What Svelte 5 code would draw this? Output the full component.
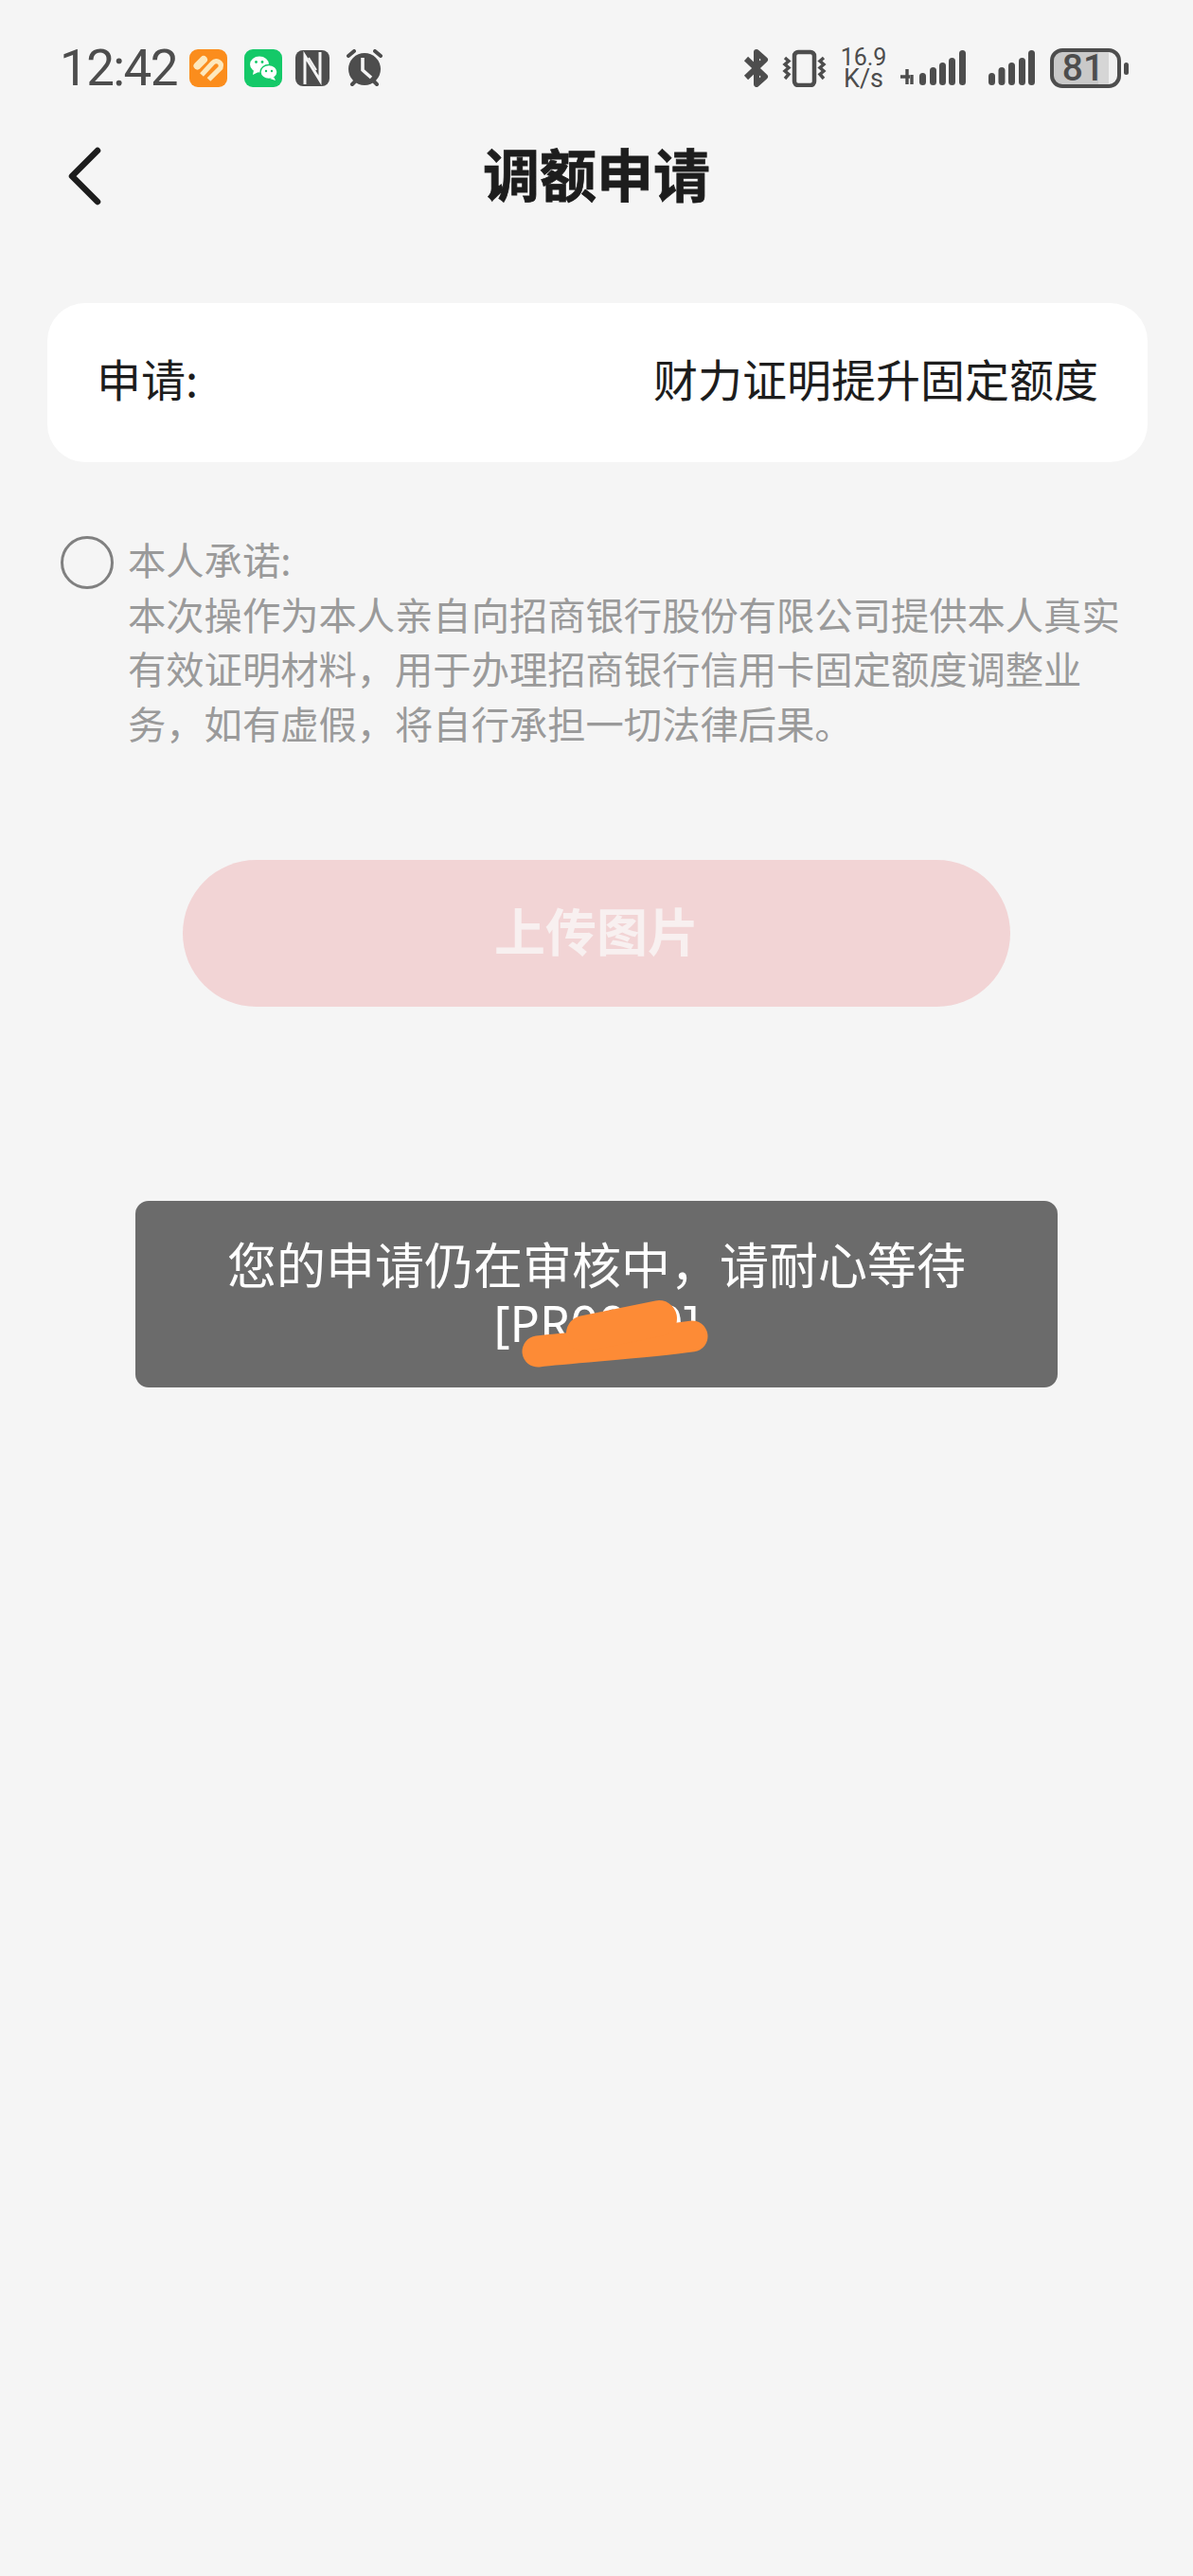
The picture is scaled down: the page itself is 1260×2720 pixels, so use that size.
<script>
  const comma = '\uFF0C';
  const body = `本次操作为本人亲自向招商银行股份有限公司提供本人真实有效证明材料${comma}用于办理招商银行信用卡固定额度调整业务${comma}如有虚假${comma}将自行承担一切法律后果。`;
  const waiting = `您的申请仍在审核中${comma}请耐心等待`;
</script>

<div class="page">
  <div class="status">
    <div class="left">
      <span class="time">12:42</span>
      <svg width="40" height="40" viewBox="0 0 40 40">
        <rect width="40" height="40" rx="9" fill="#fb8d1d" />
        <path d="M8.5 17.5 L15 11" stroke="#fde8bd" stroke-width="8" stroke-linecap="round" fill="none" />
        <path d="M13 27 L24.5 14.500 C28 10.500 35 13.500 33 19.500 L20.500 32" stroke="#fde8bd" stroke-width="5.200" fill="none" />
      </svg>
      <svg class="i-we" width="40" height="40" viewBox="0 0 40 40">
        <rect width="40" height="40" rx="9" fill="#14c968" />
        <ellipse cx="16" cy="16" rx="10" ry="8.5" fill="#fff" />
        <path d="M10 22 L9 27 L15 24 Z" fill="#fff" />
        <ellipse cx="26" cy="24" rx="9" ry="7.5" fill="#fff" stroke="#14c968" stroke-width="1.4" />
        <path d="M31 29 L33 33 L27 31 Z" fill="#fff" />
        <circle cx="12.5" cy="13.5" r="1.4" fill="#14c968" />
        <circle cx="19" cy="13.5" r="1.4" fill="#14c968" />
        <circle cx="23" cy="23" r="1.2" fill="#14c968" />
        <circle cx="29" cy="23" r="1.2" fill="#14c968" />
      </svg>
      <svg class="i-nfc" width="36" height="38" viewBox="0 0 36 38">
        <rect width="36" height="38" rx="8" fill="#4d4d4d" />
        <path d="M10 36 V6 L26 32 V2" fill="none" stroke="#f5f5f5" stroke-width="3" />
        <path d="M14 8 L22 21" stroke="#f5f5f5" stroke-width="2" />
      </svg>
      <svg class="i-alarm" width="42" height="40" viewBox="0 0 42 40">
        <circle cx="21" cy="21" r="17" fill="#4d4d4d" />
        <path d="M4 7 L10 2 M38 7 L32 2 M8 37 L12 33 M34 37 L30 33" stroke="#4d4d4d" stroke-width="4" stroke-linecap="round" />
        <path d="M19 9 V22 L28 30" fill="none" stroke="#f5f5f5" stroke-width="3.6" />
      </svg>
    </div>
    <div class="right">
      <svg width="27" height="40" viewBox="0 0 27 40">
        <path d="M3 10 L23 29 L14 37 V3 L23 11 L3 30" fill="none" stroke="#4d4d4d" stroke-width="6" stroke-linejoin="round" />
      </svg>
      <svg class="i-vib" width="47" height="40" viewBox="0 0 47 40">
        <rect x="13" y="3" width="21" height="35" rx="4" fill="none" stroke="#4d4d4d" stroke-width="4.5" />
        <path d="M3 9 L7 12.5 L3 16 L7 19.5 L3 23 L7 26.5 L3 31 M44 9 L40 12.5 L44 16 L40 19.5 L44 23 L40 26.5 L44 31" fill="none" stroke="#4d4d4d" stroke-width="3.4" />
      </svg>
      <div class="speed"><span>16.9</span><span class="ks">K/s</span></div>
      <svg class="i-sig1" width="70" height="40" viewBox="0 0 70 40">
        <path d="M1 29 H11 M8 21 V37 M13 27 V37" stroke="#4d4d4d" stroke-width="3.4" fill="none" />
        <g fill="#4d4d4d">
          <rect x="21" y="25" width="7" height="13" rx="3.5" />
          <rect x="32" y="19" width="7" height="19" rx="3.5" />
          <rect x="42" y="14" width="7" height="24" rx="3.5" />
          <rect x="52" y="9" width="7" height="29" rx="3.5" />
          <rect x="63" y="1" width="7" height="37" rx="3.5" />
        </g>
      </svg>
      <svg class="i-sig2" width="49" height="40" viewBox="0 0 49 40">
        <g fill="#4d4d4d">
          <rect x="0" y="25" width="7" height="13" rx="3.5" />
          <rect x="10.5" y="19" width="7" height="19" rx="3.5" />
          <rect x="21" y="14" width="7" height="24" rx="3.5" />
          <rect x="32" y="9" width="7" height="29" rx="3.5" />
          <rect x="42" y="1" width="7" height="37" rx="3.5" />
        </g>
      </svg>
      <div class="battery">
        <div class="shell"><span>81</span></div>
        <i class="nub"></i>
      </div>
    </div>
  </div>

  <header class="nav">
    <svg class="back" width="44" height="68" viewBox="0 0 44 68">
      <path d="M36 7 L9 34 L36 61" fill="none" stroke="#1d1d1d" stroke-width="6.5" stroke-linecap="round" stroke-linejoin="round" />
    </svg>
    <h1>调额申请</h1>
  </header>

  <section class="card">
    <span>申请:</span>
    <span>财力证明提升固定额度</span>
  </section>

  <section class="promise">
    <i class="radio"></i>
    <p>本人承诺:<br />{body}</p>
  </section>

  <div class="btn-wrap"><button>上传图片</button></div>

  <div class="toast-wrap">
    <div class="toast">
      <div>{waiting}</div>
      <div class="code">[PR0000]
        <svg class="scribble" width="197" height="72" viewBox="0 0 197 72">
          <g fill="none" stroke="#fd8b36" stroke-linecap="round">
            <path d="M17 55 C60 50 130 46 180 39" stroke-width="33" />
            <path d="M66 36 L145 20" stroke-width="38" />
          </g>
        </svg>
      </div>
    </div>
  </div>
</div>

<style>
  :global(body) {
    margin: 0;
    background: #f5f5f5;
  }
  .page {
    min-height: 2720px;
    background: #f5f5f5;
    font-family: "Noto Sans CJK SC", "Noto Sans", sans-serif;
    overflow: hidden;
  }
  .status {
    display: flex;
    justify-content: space-between;
    align-items: center;
    height: 42px;
    padding: 51px 68px 0 63px;
  }
  .left, .right {
    display: flex;
    align-items: center;
  }
  .time {
    font-family: "Roboto", sans-serif;
    font-size: 53px;
    line-height: 42px;
    color: #4d4d4d;
    width: 137px;
    letter-spacing: -1.6px;
  }
  .i-we { margin-left: 18px; }
  .i-nfc { margin-left: 14px; }
  .i-alarm { margin-left: 16px; }
  .right svg { flex: none; }
  .i-vib { margin-left: 14px; }
  .speed {
    display: flex;
    flex-direction: column;
    align-items: center;
    width: 50px;
    margin-left: 14px;
    font-family: "Roboto", sans-serif;
    font-size: 25px;
    line-height: 22px;
    color: #4d4d4d;
  }
  .ks { font-size: 27px; }
  .i-sig1 { margin-left: 13px; }
  .i-sig2 { margin-left: 24px; }
  .battery {
    display: flex;
    align-items: center;
    margin-left: 16px;
  }
  .shell {
    box-sizing: border-box;
    width: 75px;
    height: 42px;
    border: 4px solid #4d4d4d;
    border-radius: 13px;
    background: linear-gradient(to right, #c9c9c9 70%, #d6d6d6 70%, #d6d6d6 87%, #f0f0f0 87%);
    text-align: center;
  }
  .shell span {
    font-family: "Roboto", sans-serif;
    font-size: 39px;
    font-weight: 500;
    line-height: 34px;
    color: #4d4d4d;
    display: block;
    margin-right: 5px;
  }
  .nub {
    width: 5px;
    height: 13px;
    margin-left: 3px;
    background: #4d4d4d;
    border-radius: 3px;
  }
  .nav {
    position: relative;
    display: flex;
    justify-content: center;
    align-items: center;
    height: 72px;
    margin-top: 53px;
  }
  .back {
    position: absolute;
    left: 67px;
    top: 6px;
  }
  h1 {
    margin: 0;
    font-size: 60px;
    line-height: 72px;
    font-weight: 700;
    color: #1d1d1d;
    -webkit-text-stroke: 0.8px #1d1d1d;
  }
  .card {
    box-sizing: border-box;
    display: flex;
    justify-content: space-between;
    align-items: center;
    height: 168px;
    margin: 102px 48px 0 50px;
    padding: 0 52px 11px;
    background: #fff;
    border-radius: 40px;
    font-size: 47px;
    color: #1d1d1d;
  }
  .promise {
    display: flex;
    margin: 78px 70px 0 64px;
  }
  .radio {
    flex: none;
    box-sizing: border-box;
    width: 56px;
    height: 56px;
    border: 3.5px solid #808080;
    border-radius: 50%;
  }
  .promise p {
    margin: -5px 0 0 15px;
    font-size: 40.3px;
    line-height: 57.5px;
    color: #9a9a9a;
  }
  .btn-wrap {
    display: flex;
    justify-content: center;
    margin-top: 117px;
  }
  button {
    box-sizing: border-box;
    width: 874px;
    height: 155px;
    padding: 0 0 8px;
    border: 0;
    border-radius: 78px;
    background: #f2d4d5;
    color: #f8f0f0;
    font-family: inherit;
    font-size: 54px;
    font-weight: 700;
  }
  .toast-wrap {
    display: flex;
    justify-content: center;
    margin-top: 205px;
  }
  .toast {
    width: 974px;
    height: 197px;
    box-sizing: border-box;
    padding-top: 34px;
    background: #6b6b6b;
    border-radius: 14px;
    color: #fff;
    font-size: 52px;
    line-height: 63px;
    text-align: center;
  }
  .code {
    position: relative;
    width: max-content;
    margin: 0 auto;
    font-family: "Noto Sans", sans-serif;
    white-space: nowrap;
  }
  .scribble {
    position: absolute;
    left: 29px;
    top: 7px;
  }
</style>
